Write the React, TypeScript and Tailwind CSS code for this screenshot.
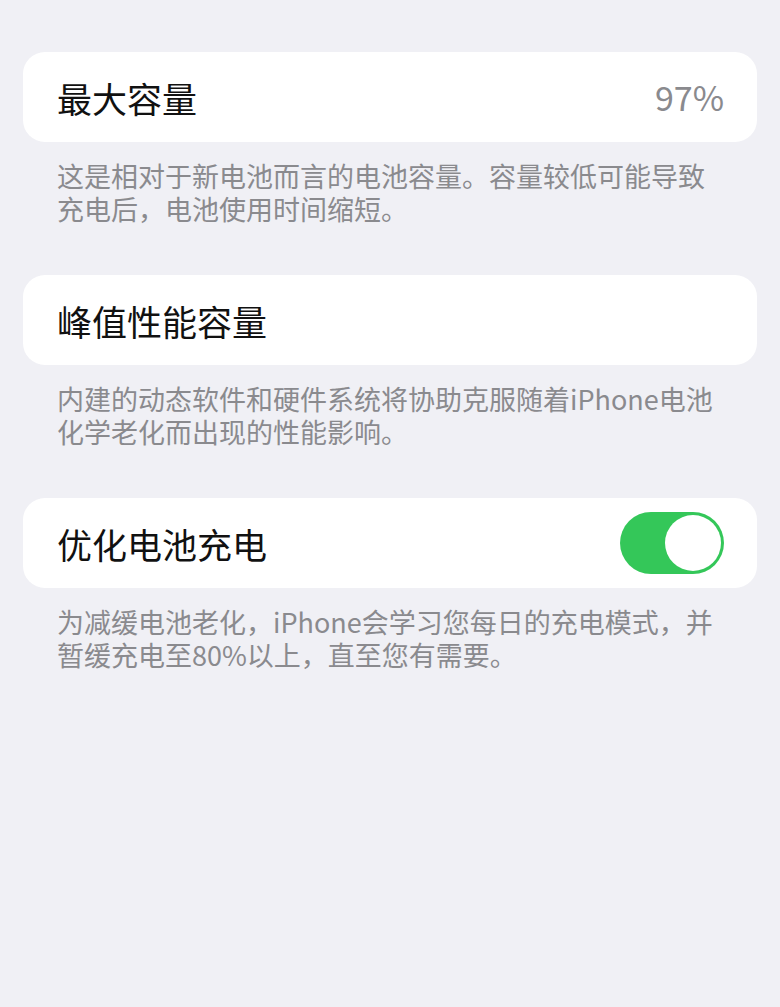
const font = { fontFamily: '"Noto Sans CJK SC", "Noto Sans", sans-serif' };

interface SectionProps {
  title: string;
  lines: string[];
  right?: React.ReactNode;
}

const Toggle = () => (
  <div className="flex h-[62px] w-[104px] items-center justify-end rounded-full bg-[#34c759] pr-[3px]">
    <div className="h-[56px] w-[56px] rounded-full bg-white"></div>
  </div>
);

const Section: React.FC<SectionProps> = ({ title, lines, right }) => {
  return (
    <div className="mb-[50px]">
      <div className="flex h-[90px] items-center justify-between rounded-[22px] bg-white pl-[34px] pr-[33px]">
        <span className="text-[35px] leading-none text-[#111]">{title}</span>
        {right}
      </div>
      <div className="pt-[17px] pl-[34px] text-[27px] leading-[33px] text-[#8a8a8e]">
        {lines.map((line) => (
          <div className="h-[33px] whitespace-nowrap" key={line}>
            {line}
          </div>
        ))}
      </div>
    </div>
  );
};

export default function App() {
  return (
    <div className="min-h-[1007px] w-full bg-[#f0f0f5] px-[23px] pt-[52px]" style={font}>
      <Section
        title="最大容量"
        right={<span className="text-[34px] leading-none text-[#8a8a8e]">97%</span>}
        lines={["这是相对于新电池而言的电池容量。容量较低可能导致", "充电后，电池使用时间缩短。"]}
      />
      <Section
        title="峰值性能容量"
        lines={["内建的动态软件和硬件系统将协助克服随着iPhone电池", "化学老化而出现的性能影响。"]}
      />
      <Section
        title="优化电池充电"
        right={<Toggle />}
        lines={["为减缓电池老化，iPhone会学习您每日的充电模式，并", "暂缓充电至80%以上，直至您有需要。"]}
      />
    </div>
  );
}
